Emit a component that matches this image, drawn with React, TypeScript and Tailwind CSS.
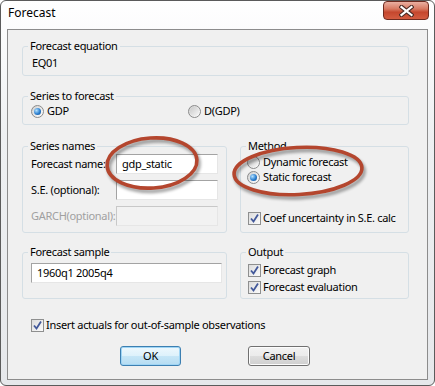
import React from "react";

type BoxProps = { title: string; className: string; children: React.ReactNode };

const GroupBox = ({ title, className, children }: BoxProps) => {
  return (
    <fieldset className={`rounded-[3px] border border-[#d5dfe5] ${className}`}>
      <legend className="ml-[5px] px-[2px] leading-[16px]">{title}</legend>
      {children}
    </fieldset>
  );
};

const Radio = ({ checked }: { checked?: boolean }) => {
  return (
    <span className="flex h-[13px] w-[13px] shrink-0 items-center justify-center rounded-full border border-[#8a8a8a] bg-[linear-gradient(135deg,#d0d0d0,#ffffff)]">
      {checked ? (
        <span className="h-[7px] w-[7px] rounded-full bg-[radial-gradient(circle_at_35%_35%,#b4e2ff,#2b7fd0_55%,#0b4585)]" />
      ) : (
        <span className="h-[9px] w-[9px] rounded-full bg-[linear-gradient(135deg,#c9c9c9,#f6f6f6)]" />
      )}
    </span>
  );
};

const Check = () => {
  return (
    <span className="flex h-[13px] w-[13px] shrink-0 items-center justify-center border border-[#8e8f8f] bg-[linear-gradient(135deg,#dcdcdc,#fbfbfb)]">
      <svg width="11" height="11" viewBox="0 0 11 11">
        <path d="M2 5.5 L4.5 8.5 L9 1.5" fill="none" stroke="#42589a" strokeWidth="1.8" />
      </svg>
    </span>
  );
};

const TextBox = ({ value, disabled, className }: { value?: string; disabled?: boolean; className: string }) => {
  return (
    <div
      className={`flex h-[20px] shrink-0 items-center border border-t-[#a3a3a3] border-l-[#a3a3a3] border-r-[#e6e6e6] border-b-[#e6e6e6] pl-[5px] leading-[16px] ${
        disabled ? "bg-[#f2f2f2] border-t-[#c8c8c8] border-l-[#c8c8c8]" : "bg-white"
      } ${className}`}
    >
      {value}
    </div>
  );
};

const CloseButton = () => {
  return (
    <div className="mr-[5px] flex h-[19px] w-[46px] items-center justify-center rounded-[4px] border border-[#6e2b20] bg-[linear-gradient(180deg,#eab0a2_0%,#d87a63_40%,#c5472e_60%,#d35c41_100%)]">
      <svg width="15" height="12" viewBox="0 0 15 12">
        <path d="M2.5 2 L12.5 10 M12.5 2 L2.5 10" stroke="#4a2a24" strokeWidth="4.2" strokeLinecap="square" />
        <path d="M2.5 2 L12.5 10 M12.5 2 L2.5 10" stroke="#ffffff" strokeWidth="2.2" strokeLinecap="square" />
      </svg>
    </div>
  );
};

const Annotations = () => {
  return (
    <svg className="pointer-events-none absolute left-0 top-0" width="435" height="386">
      <defs>
        <filter id="soft" x="-20%" y="-20%" width="140%" height="140%">
          <feGaussianBlur stdDeviation="1.8" />
        </filter>
      </defs>
      <g filter="url(#soft)" opacity="0.35">
        <ellipse cx="154" cy="166" rx="45" ry="25" transform="rotate(-4 154 166)" fill="none" stroke="#000" strokeWidth="4" />
        <ellipse cx="300" cy="174" rx="64" ry="23.5" transform="rotate(-3 300 174)" fill="none" stroke="#000" strokeWidth="4" />
      </g>
      <ellipse cx="152" cy="163" rx="45" ry="25" transform="rotate(-4 152 163)" fill="none" stroke="#b4462e" strokeWidth="3.6" />
      <ellipse cx="298" cy="171" rx="64" ry="23.5" transform="rotate(-3 298 171)" fill="none" stroke="#b4462e" strokeWidth="3.6" />
    </svg>
  );
};

export default function App() {
  return (
    <div className="relative h-[386px] w-[435px] whitespace-nowrap bg-white font-['Noto_Sans',sans-serif] text-[11px] tracking-[-0.3px] text-black">
      <div className="flex h-full w-full flex-col rounded-[6px] border border-[#5b5b5b] bg-[linear-gradient(180deg,#ffffff_0%,#eef0f2_35%,#e6e8eb_100%)]">
        {/* title bar */}
        <div className="flex h-[28px] items-start justify-between">
          <span className="ml-[7px] mt-[4px] text-[12px] leading-[16px] tracking-normal">Forecast</span>
          <CloseButton />
        </div>

        {/* client area */}
        <div className="mx-[6px] flex h-[351px] flex-col border border-[#8c8c8c] bg-[#f0f0f0] pl-[14px] pr-[18px] pt-[8px]">
          <GroupBox title="Forecast equation" className="h-[38px] w-[387px]">
            <div className="pl-[9px] pt-[1px] leading-[16px]">EQ01</div>
          </GroupBox>

          <GroupBox title="Series to forecast" className="mt-[12px] h-[37px] w-[387px]">
            <div className="flex h-[14px] items-center pl-[8px]">
              <div className="flex w-[157px] items-center gap-[3px]">
                <Radio checked />
                <span>GDP</span>
              </div>
              <div className="flex items-center gap-[3px]">
                <Radio />
                <span>D(GDP)</span>
              </div>
            </div>
          </GroupBox>

          <div className="mt-[13px] flex gap-[13px]">
            <GroupBox title="Series names" className="h-[95px] w-[205px]">
              <div className="flex flex-col gap-[6px] pl-[8px] pr-[8px]">
                <div className="flex items-center justify-between">
                  <span>Forecast name:</span>
                  <TextBox value="gdp_static" className="w-[102px]" />
                </div>
                <div className="flex items-center justify-between">
                  <span>S.E. (optional):</span>
                  <TextBox className="w-[102px]" />
                </div>
                <div className="flex items-center justify-between">
                  <span className="text-[#a0a0a0]">GARCH(optional):</span>
                  <TextBox disabled className="w-[102px]" />
                </div>
              </div>
            </GroupBox>

            <GroupBox title="Method" className="h-[95px] w-[169px]">
              <div className="flex flex-col pl-[6px] pt-[1px]">
                <div className="flex h-[15px] items-center gap-[3px]">
                  <Radio />
                  <span>Dynamic forecast</span>
                </div>
                <div className="flex h-[15px] items-center gap-[3px]">
                  <Radio checked />
                  <span>Static forecast</span>
                </div>
                <div className="ml-[1px] mt-[25px] flex h-[16px] items-center gap-[2px]">
                  <Check />
                  <span>Coef uncertainty in S.E. calc</span>
                </div>
              </div>
            </GroupBox>
          </div>

          <div className="mt-[11px] flex gap-[13px]">
            <GroupBox title="Forecast sample" className="h-[55px] w-[205px]">
              <TextBox value="1960q1 2005q4" className="ml-[8px] mt-[3px] w-[191px]" />
            </GroupBox>

            <GroupBox title="Output" className="h-[55px] w-[169px]">
              <div className="flex flex-col pl-[7px] pt-[2px]">
                <div className="flex h-[17px] items-center gap-[2px]">
                  <Check />
                  <span>Forecast graph</span>
                </div>
                <div className="flex h-[17px] items-center gap-[2px]">
                  <Check />
                  <span>Forecast evaluation</span>
                </div>
              </div>
            </GroupBox>
          </div>

          <div className="ml-[9px] mt-[18px] flex h-[16px] items-center gap-[2px]">
            <Check />
            <span>Insert actuals for out-of-sample observations</span>
          </div>

          <div className="ml-[98px] mt-[13px] flex gap-[67px]">
            <button className="flex h-[20px] w-[61px] items-center justify-center rounded-[3px] border border-[#3c7fb1] bg-[linear-gradient(180deg,#eef8fd_0%,#ddf1fb_50%,#c6e6f7_50%,#b5dcf2_100%)] shadow-[inset_0_0_0_1px_#9fd5f5]">
              OK
            </button>
            <button className="flex h-[20px] w-[62px] items-center justify-center rounded-[3px] border border-[#707070] bg-[linear-gradient(180deg,#f2f2f2_0%,#ebebeb_50%,#dddddd_50%,#cfcfcf_100%)] shadow-[inset_0_0_0_1px_#fcfcfc]">
              Cancel
            </button>
          </div>
        </div>
      </div>
      <Annotations />
    </div>
  );
}
